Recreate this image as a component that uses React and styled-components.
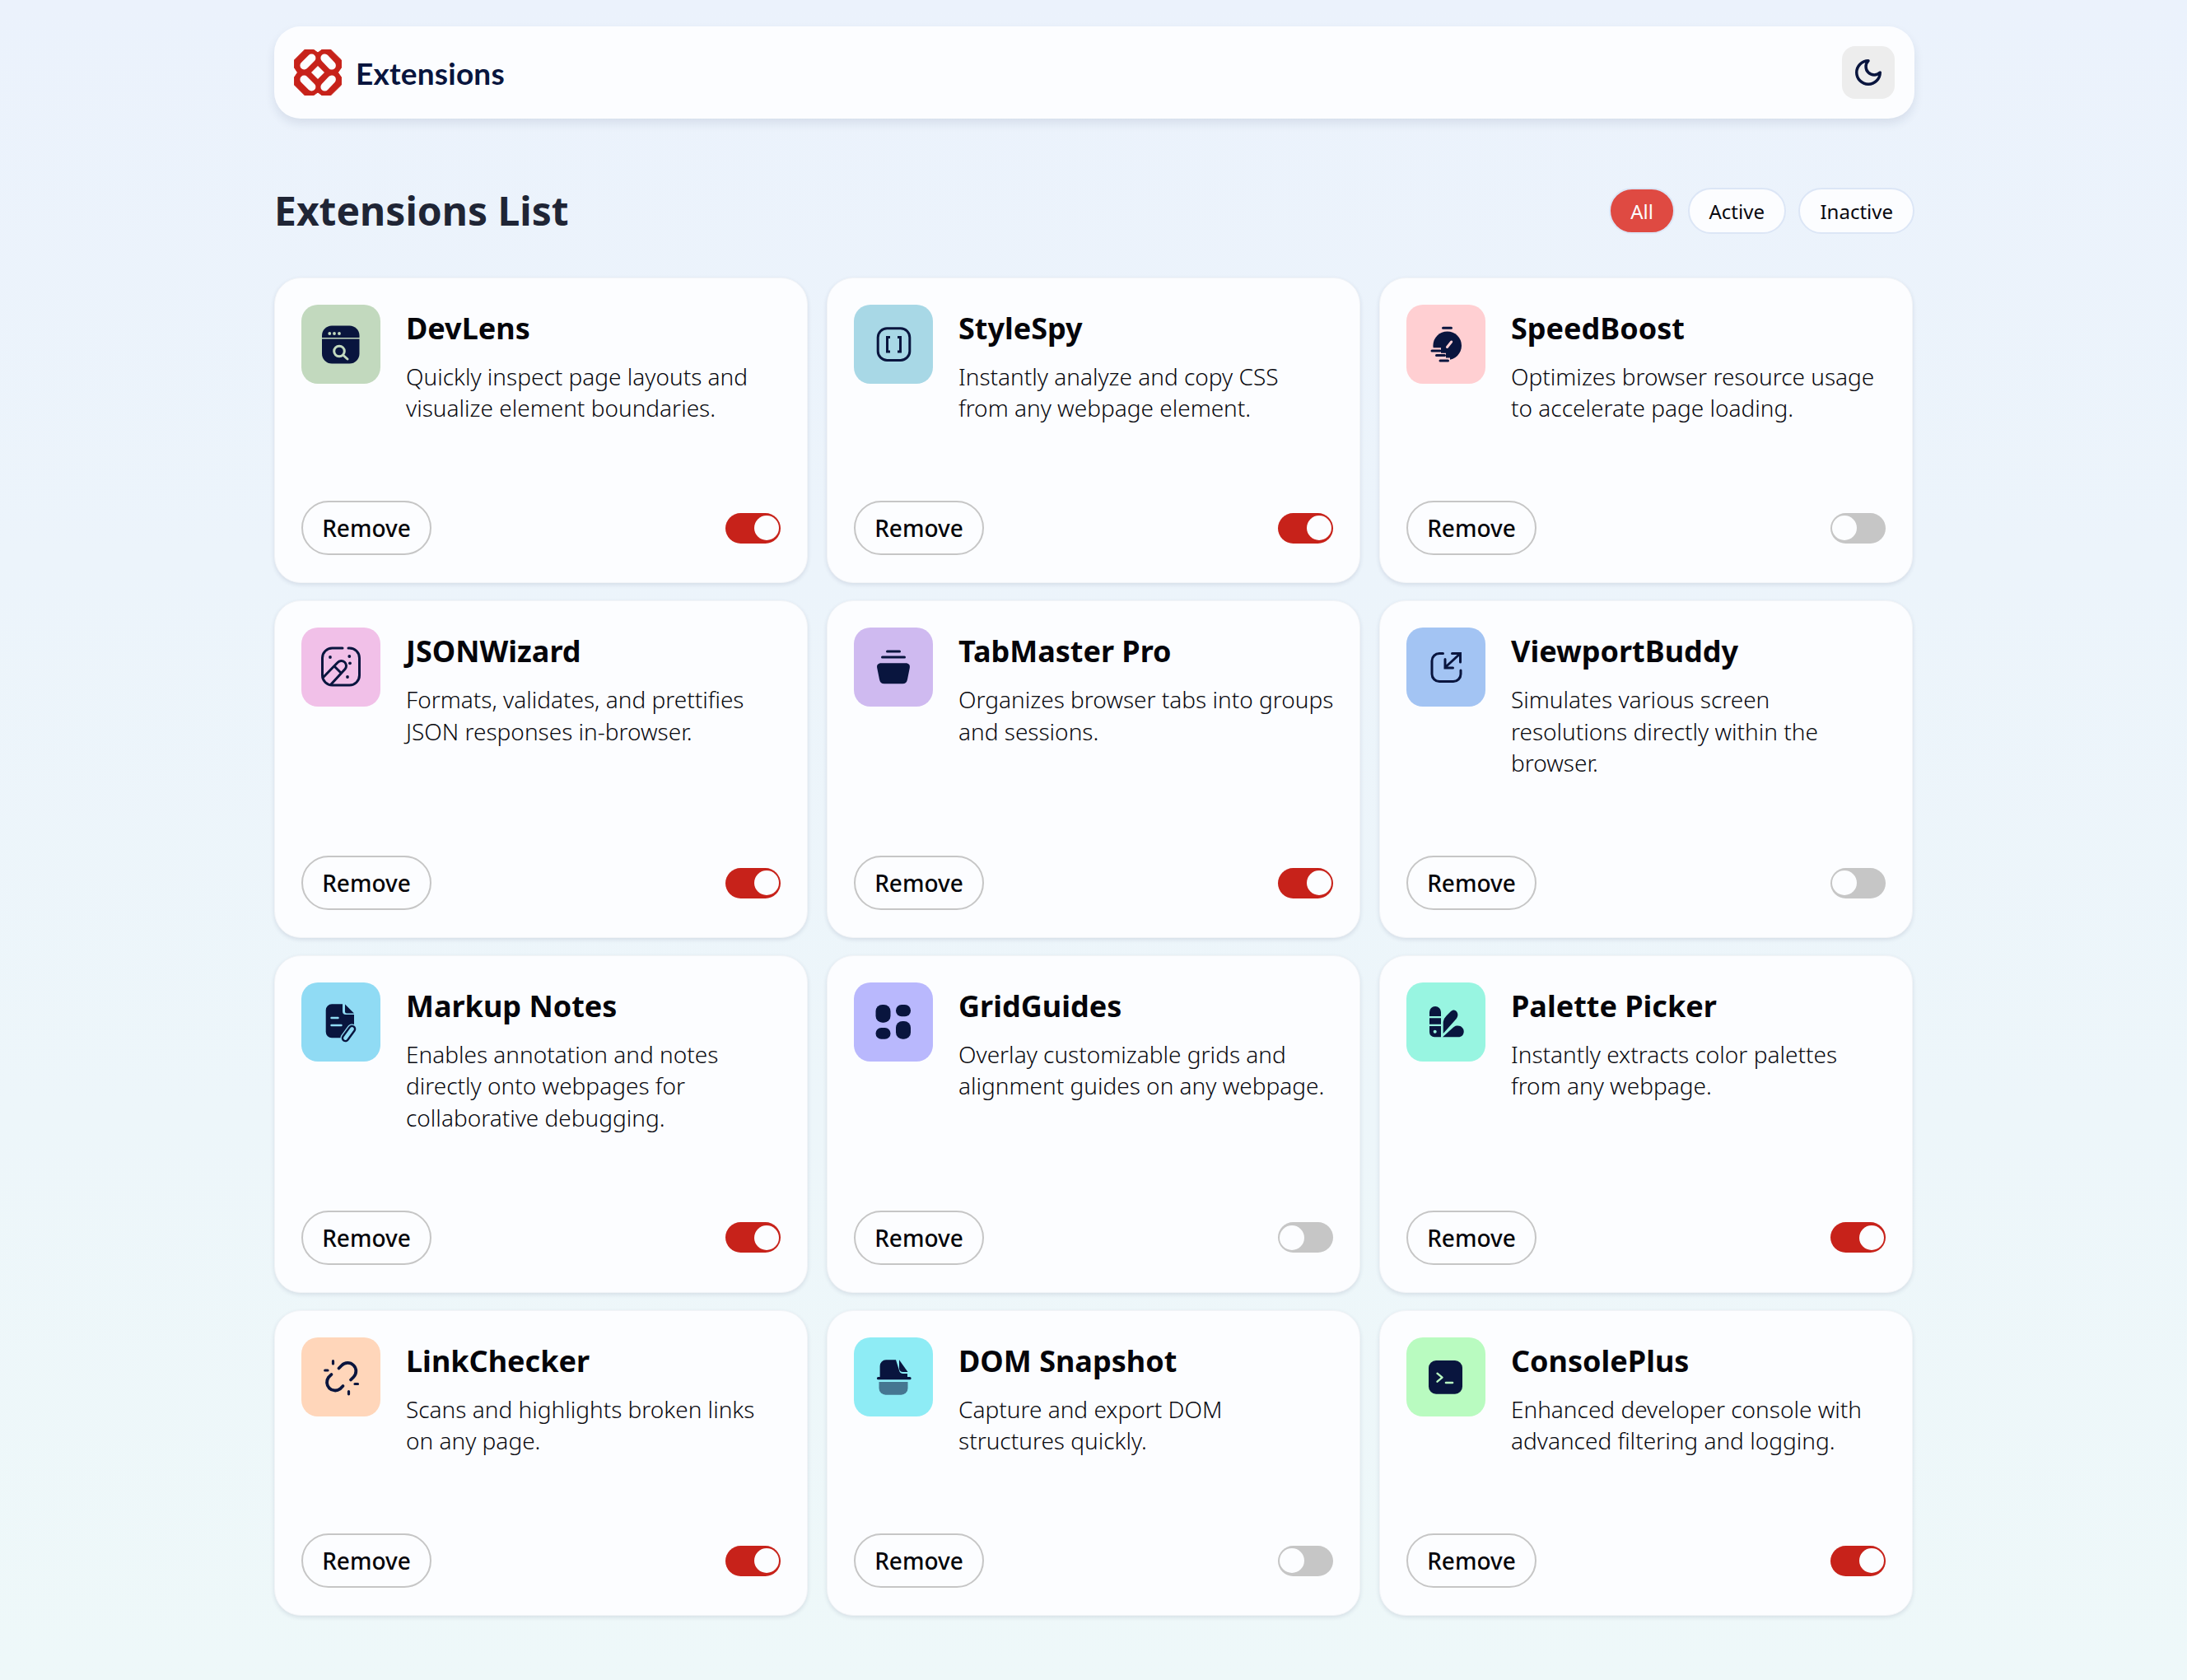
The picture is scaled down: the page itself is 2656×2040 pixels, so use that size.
import React from 'react';
import styled, { createGlobalStyle } from 'styled-components';

const navy = '#09153E';

const GlobalStyle = createGlobalStyle`
  * { box-sizing: border-box; }
  html, body { margin: 0; padding: 0; }
  body {
    min-height: 2040px;
    font-family: "Noto Sans", sans-serif;
    background: linear-gradient(180deg, #EBF2FC 0%, #EEF8F9 100%);
  }
`;

const Page = styled.main`
  width: 1992px;
  margin: 0 0 0 333px;
  padding-top: 32px;
`;

const Header = styled.header`
  height: 112px;
  display: flex;
  align-items: center;
  justify-content: space-between;
  padding: 0 24px;
  background: #FCFDFF;
  border-radius: 32px;
  box-shadow: 0 6px 12px rgba(30, 50, 90, 0.1);
`;

const Brand = styled.div`
  display: flex;
  align-items: center;
  gap: 17px;
`;

const BrandName = styled.span`
  font-family: Lato, sans-serif;
  font-size: 37px;
  font-weight: 700;
  letter-spacing: 0.2px;
  color: ${navy};
`;

const ThemeButton = styled.button`
  width: 64px;
  height: 64px;
  display: flex;
  align-items: center;
  justify-content: center;
  padding: 0;
  border: none;
  border-radius: 16px;
  background: #EDEDED;
`;

const TitleRow = styled.div`
  display: flex;
  align-items: center;
  justify-content: space-between;
  height: 56px;
  margin: 84px 0 53px;
`;

const PageTitle = styled.h1`
  margin: 0 0 2px;
  font-size: 48px;
  font-weight: 700;
  color: #1F2535;
`;

const Filters = styled.div`
  display: flex;
  gap: 15.5px;
`;

const FilterPill = styled.button`
  height: 56px;
  padding: 0 24px;
  border-radius: 28px;
  border: 2px solid #DCE6F6;
  font-family: inherit;
  font-size: 24px;
  color: ${p => (p.$active ? '#FCFDFF' : '#09090F')};
  background: ${p => (p.$active ? '#DF4A42' : '#FCFDFF')};
`;

const CardGrid = styled.section`
  display: grid;
  grid-template-columns: repeat(3, 648px);
  column-gap: 23px;
  row-gap: 21px;
`;

const Card = styled.article`
  display: flex;
  flex-direction: column;
  justify-content: space-between;
  padding: 32px 32px 33px;
  background: #FCFDFF;
  border: 1px solid #F2F4F7;
  border-radius: 32px;
  box-shadow: 0 2px 5px rgba(30, 50, 90, 0.12);
`;

const CardTop = styled.div`
  display: flex;
  gap: 31px;
  margin-bottom: 93.5px;
`;

const IconBox = styled.div`
  flex: none;
  width: 96px;
  height: 96px;
  border-radius: 20px;
  background: ${p => p.$bg};
`;

const CardBody = styled.div`
  flex: none;
  width: ${p => (p.$wide ? '463px' : '455px')};
`;

const CardTitle = styled.h2`
  margin: 0 0 11px;
  font-size: 36px;
  line-height: 57px;
  font-weight: 700;
  color: #05050A;
`;

const CardText = styled.p`
  margin: 0;
  font-size: 28px;
  line-height: 38.4px;
  font-weight: 300;
  color: #0A0A10;
`;

const CardFooter = styled.div`
  display: flex;
  align-items: center;
  justify-content: space-between;
`;

const RemoveButton = styled.button`
  width: 158px;
  height: 66px;
  padding: 0;
  border: 2px solid #C6C6C6;
  border-radius: 33px;
  background: #FCFDFF;
  font-family: inherit;
  font-size: 28px;
  font-weight: 500;
  color: #05050A;
`;

const Toggle = styled.div`
  width: 67px;
  height: 37px;
  display: flex;
  align-items: center;
  justify-content: ${p => (p.$on ? 'flex-end' : 'flex-start')};
  padding: 0 2px;
  border-radius: 19px;
  background: ${p => (p.$on ? '#C7221A' : '#C6C6C6')};
`;

const Knob = styled.span`
  width: 30px;
  height: 30px;
  border-radius: 50%;
  background: #FCFDFF;
`;

const Glyph = ({ children }) => (
  <svg width="96" height="96" viewBox="0 0 96 96" fill="none" stroke="none">{children}</svg>
);

const icons = {
  devlens: (
    <Glyph>
      <rect x="25" y="25.5" width="45.5" height="46" rx="12" fill={navy} />
      <path d="M25 40.7H71" stroke="#C2D9BE" strokeWidth="1.5" />
      <circle cx="34.3" cy="35" r="1.9" fill="#C2D9BE" />
      <circle cx="40" cy="35" r="1.9" fill="#C2D9BE" />
      <circle cx="46" cy="35" r="1.9" fill="#C2D9BE" />
      <circle cx="46" cy="56.5" r="6.3" stroke="#C2D9BE" strokeWidth="3" />
      <path d="M51 61.5L56 66" stroke="#C2D9BE" strokeWidth="3" strokeLinecap="round" />
    </Glyph>
  ),
  stylespy: (
    <Glyph>
      <rect x="29.2" y="28.8" width="38.6" height="38.6" rx="11" stroke={navy} strokeWidth="3" />
      <path d="M44 39.5H40.5V57H44M53 39.5H56.5V57H53" stroke={navy} strokeWidth="3" />
    </Glyph>
  ),
  speedboost: (
    <Glyph>
      <circle cx="49.7" cy="49.7" r="17.3" fill={navy} />
      <polygon points="29,52.3 42,52.3 42,58.7 48,58.7 48,64.5 53,64.5 53,72 29,72" fill="#FFCFD2" />
      <path d="M44.5 28.3H54.5M31 56H41M36.5 61.5H46.5M41 68H50.5" stroke={navy} strokeWidth="3" strokeLinecap="round" />
      <path d="M49.5 51.5L54.7 45" stroke="#FFCFD2" strokeWidth="3" strokeLinecap="round" />
    </Glyph>
  ),
  jsonwizard: (
    <Glyph>
      <path d="M50 25H37.5A12 12 0 0 0 25.5 37V58A12 12 0 0 0 37.5 70H58.5A12 12 0 0 0 70.5 58V37A12 12 0 0 0 58.5 25H57" stroke={navy} strokeWidth="3" strokeLinecap="round" />
      <path d="M27 60L44 42.5A6 6 0 0 1 53 50.5L36 69M40 47L48 55" stroke={navy} strokeWidth="3" strokeLinecap="round" />
      <circle cx="35" cy="36" r="1.9" fill={navy} />
      <circle cx="58.3" cy="35" r="1.9" fill={navy} />
      <circle cx="59" cy="43.3" r="1.9" fill={navy} />
      <circle cx="56" cy="60" r="1.9" fill={navy} />
    </Glyph>
  ),
  tabmaster: (
    <Glyph>
      <path d="M40.5 29H55.5M34.5 36H61.5" stroke={navy} strokeWidth="3" strokeLinecap="round" />
      <path d="M33 43.3H63C66.5 43.3 68.5 45.5 67.8 49L65 63C64.4 66.5 62.5 68.3 59 68.3H37C33.5 68.3 31.6 66.5 31 63L28.2 49C27.5 45.5 29.5 43.3 33 43.3Z" fill={navy} />
    </Glyph>
  ),
  viewport: (
    <Glyph>
      <path d="M44.5 31.5H40A9 9 0 0 0 31 40.5V56.5A9 9 0 0 0 40 65.5H57A9 9 0 0 0 66 56.5V52" stroke={navy} strokeWidth="3" strokeLinecap="round" />
      <path d="M47 48.5L65.5 31.5M55.5 31.5H65.5V42M47 38.5V49H56.5" stroke={navy} strokeWidth="3" strokeLinecap="round" />
    </Glyph>
  ),
  markup: (
    <Glyph>
      <path d="M37 26.3H50V35A4 4 0 0 0 54 39H64V60A7.3 7.3 0 0 1 56.7 67.3H37A7.3 7.3 0 0 1 29.7 60V33.6A7.3 7.3 0 0 1 37 26.3Z" fill={navy} />
      <path d="M53 26.5L64 37.5H55A2 2 0 0 1 53 35.5Z" fill={navy} />
      <path d="M36.5 43H44.5M36.5 52H48.5" stroke="#90DBF4" strokeWidth="2.4" strokeLinecap="round" />
      <path d="M50.5 65.5L58.5 54.5A3.6 3.6 0 0 1 64.5 58.5L56.5 69.5A3.6 3.6 0 0 1 50.5 65.5Z" fill="#09153E" stroke="#90DBF4" strokeWidth="5" paintOrder="stroke" />
      <path d="M50.5 65.5L58.5 54.5A3.6 3.6 0 0 1 64.5 58.5L56.5 69.5A3.6 3.6 0 0 1 50.5 65.5Z" fill="#90DBF4" stroke={navy} strokeWidth="2.4" />
    </Glyph>
  ),
  gridguides: (
    <Glyph>
      <rect x="26.5" y="27" width="18" height="21.7" rx="8" fill={navy} />
      <rect x="26.5" y="55" width="18" height="13.7" rx="6.8" fill={navy} />
      <rect x="51" y="27" width="18" height="14.3" rx="7" fill={navy} />
      <rect x="51" y="47" width="18" height="21.7" rx="8" fill={navy} />
    </Glyph>
  ),
  palette: (
    <Glyph>
      <path d="M28 36A7 7 0 0 1 42 36V41H28ZM28 43.2H42V50.8H28ZM28 53H42V66.3H34A6 6 0 0 1 28 60.3Z" fill={navy} />
      <circle cx="34.7" cy="59.7" r="2" fill="#98F5E1" />
      <path d="M44.7 62V48A14 14 0 0 1 49 40L54 35C56.5 32.5 60 33 61.5 36C63 38.5 62.6 41.5 60.7 44Z" fill={navy} />
      <path d="M44 66.3L57 54.5C59 52.8 60.5 52.6 62.5 52.6C66.8 52.6 69.7 56 69.7 59.5C69.7 63.5 67 66.3 63 66.3Z" fill={navy} />
    </Glyph>
  ),
  linkchecker: (
    <Glyph>
      <path d="M45.5 37.5L49 34A10 10 0 0 1 63.5 48L60 51.5M50.5 59L47 62.5A10 10 0 0 1 33 48.5L36.5 45" stroke={navy} strokeWidth="3.8" strokeLinecap="round" />
      <path d="M38.5 28.7V32M28.7 40H32M57.5 65.5V68.8M65 56.5H68.5" stroke={navy} strokeWidth="3.2" strokeLinecap="round" />
    </Glyph>
  ),
  dom: (
    <Glyph>
      <path d="M39 27.3H51L55 40A5 5 0 0 0 60 44H65V48H31.6V34.7A7.4 7.4 0 0 1 39 27.3Z" fill={navy} />
      <path d="M55 27.3L65.5 42H59.5A4.5 4.5 0 0 1 55 37.5Z" fill={navy} />
      <path d="M29.5 49.7H68" stroke={navy} strokeWidth="3.2" strokeLinecap="round" />
      <path d="M30.5 54H65.5V61.7A8 8 0 0 1 57.5 69.7H38.5A8 8 0 0 1 30.5 61.7Z" fill={navy} fillOpacity="0.55" />
    </Glyph>
  ),
  console: (
    <Glyph>
      <rect x="27" y="28" width="41" height="40.7" rx="9" fill={navy} />
      <path d="M37.5 43.7L43.5 48.7L37.5 53.7" stroke="#B9FBC0" strokeWidth="2.4" strokeLinecap="round" strokeLinejoin="round" />
      <path d="M48 55H56" stroke="#B9FBC0" strokeWidth="2.6" strokeLinecap="round" />
    </Glyph>
  ),
};

const extensions = [
  { name: 'DevLens', text: 'Quickly inspect page layouts and visualize element boundaries.', icon: 'devlens', bg: '#C2D9BE', on: true },
  { name: 'StyleSpy', text: 'Instantly analyze and copy CSS from any webpage element.', icon: 'stylespy', bg: '#A8D8E6', on: true },
  { name: 'SpeedBoost', text: 'Optimizes browser resource usage to accelerate page loading.', icon: 'speedboost', bg: '#FFCFD2', on: false },
  { name: 'JSONWizard', text: 'Formats, validates, and prettifies JSON responses in-browser.', icon: 'jsonwizard', bg: '#F1C0E8', on: true },
  { name: 'TabMaster Pro', text: 'Organizes browser tabs into groups and sessions.', icon: 'tabmaster', bg: '#CFBAF0', on: true, wide: true },
  { name: 'ViewportBuddy', text: 'Simulates various screen resolutions directly within the browser.', icon: 'viewport', bg: '#A3C4F3', on: false },
  { name: 'Markup Notes', text: 'Enables annotation and notes directly onto webpages for collaborative debugging.', icon: 'markup', bg: '#90DBF4', on: true },
  { name: 'GridGuides', text: 'Overlay customizable grids and alignment guides on any webpage.', icon: 'gridguides', bg: '#B9B8FD', on: false },
  { name: 'Palette Picker', text: 'Instantly extracts color palettes from any webpage.', icon: 'palette', bg: '#98F5E1', on: true },
  { name: 'LinkChecker', text: 'Scans and highlights broken links on any page.', icon: 'linkchecker', bg: '#FFD6BA', on: true },
  { name: 'DOM Snapshot', text: 'Capture and export DOM structures quickly.', icon: 'dom', bg: '#8EECF5', on: false },
  { name: 'ConsolePlus', text: 'Enhanced developer console with advanced filtering and logging.', icon: 'console', bg: '#B9FBC0', on: true },
];

const Logo = () => (
  <svg width="58" height="56" viewBox="0 0 57.2 56">
    <polygon
      points="13,0 23,0 28.6,4 34,0 44,0 57.2,13 57.2,22 53,28 57.2,34 57.2,43 44,56 34,56 28.6,52 23,56 13,56 0,43 0,34 4,28 0,22 0,13"
      fill="#C7221A"
      stroke="#C7221A"
      strokeLinejoin="round"
    />
    <path d="M12 19.5L21 10.5M37 10.5L45.5 19.5M12 36.5L21 45.5M45.5 36.5L37 45.5" stroke="#FCFDFF" strokeWidth="10" strokeLinecap="round" />
    <polygon points="28.6,20 36.6,28 28.6,36 20.6,28" fill="#FCFDFF" />
  </svg>
);

const Moon = () => (
  <svg width="38" height="38" viewBox="0 0 24 24" fill="none" stroke={navy} strokeWidth="2.2" strokeLinecap="round" strokeLinejoin="round">
    <path d="M12 3a6 6 0 0 0 9 9 9 9 0 1 1-9-9Z" />
  </svg>
);

export default function App() {
  return (
    <Page>
      <GlobalStyle />
      <Header>
        <Brand>
          <Logo />
          <BrandName>Extensions</BrandName>
        </Brand>
        <ThemeButton aria-label="Toggle theme">
          <Moon />
        </ThemeButton>
      </Header>

      <TitleRow>
        <PageTitle>Extensions List</PageTitle>
        <Filters>
          <FilterPill $active>All</FilterPill>
          <FilterPill>Active</FilterPill>
          <FilterPill>Inactive</FilterPill>
        </Filters>
      </TitleRow>

      <CardGrid>
        {extensions.map(ext => (
          <Card key={ext.name}>
            <CardTop>
              <IconBox $bg={ext.bg}>{icons[ext.icon]}</IconBox>
              <CardBody $wide={ext.wide}>
                <CardTitle>{ext.name}</CardTitle>
                <CardText>{ext.text}</CardText>
              </CardBody>
            </CardTop>
            <CardFooter>
              <RemoveButton>Remove</RemoveButton>
              <Toggle $on={ext.on}>
                <Knob />
              </Toggle>
            </CardFooter>
          </Card>
        ))}
      </CardGrid>
    </Page>
  );
}
